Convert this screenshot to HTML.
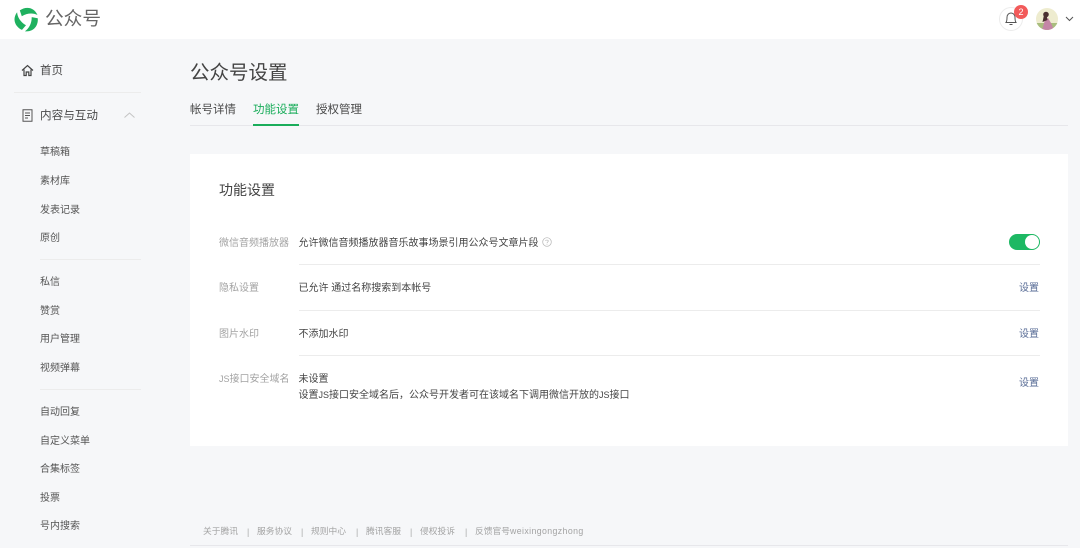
<!DOCTYPE html>
<html lang="zh"><head><meta charset="utf-8"><title>公众号设置</title>
<style>
*{margin:0;padding:0;box-sizing:border-box}
html,body{width:1080px;height:548px;overflow:hidden}
body{position:relative;background:#f6f7f9;font-family:"Liberation Sans","Noto Sans CJK SC",sans-serif;color:#353535}
#p{position:absolute;left:0;top:0;width:1080px;height:548px;filter:blur(.3px)}
.a{position:absolute;white-space:nowrap;line-height:1}
.s{position:absolute;left:40px;font-size:10px;line-height:1;color:#555;white-space:nowrap}
.l{position:absolute;left:219px;font-size:10px;line-height:1;color:#a3a3a3;white-space:nowrap}
.v{position:absolute;left:298.500px;font-size:10px;line-height:1;color:#444;white-space:nowrap}
.e{position:absolute;left:1019px;font-size:10px;line-height:1;color:#576b95;white-space:nowrap}
.h{position:absolute;height:1px;background:#ececec}
.f{position:absolute;top:527px;font-size:8.75px;line-height:1;color:#a3a3a3;white-space:nowrap}
.j{font-size:9px}
</style></head><body><div id="p">
<div class="a" style="left:0;top:0;width:1080px;height:39px;background:#fff"></div>
<svg class="a" style="left:14px;top:7px" width="25" height="25" viewBox="0 0 25 25"><defs><path id="b" d="M7.800 9.200 5.800 3.400C11.500-.8 20-.3 23.500 8 19.500 6 13.500 5.800 7.800 9.200Z" fill="#1fb15f"/></defs><use href="#b"/><use href="#b" transform="rotate(120 12.500 12.500)"/><use href="#b" transform="rotate(240 12.500 12.500)"/></svg>
<div class="a" style="left:45px;top:10px;font-size:18.700px;color:#666">公众号</div>
<div class="a" style="left:999px;top:7px;width:24px;height:24px;border:1px solid #ececec;border-radius:50%;background:#fff"></div>
<svg class="a" style="left:1004px;top:11px" width="14" height="15" viewBox="0 0 14 15"><path d="M2 11.500C3 10 3 8.500 3 6.500 3 3.500 5 2 7 2s4 1.500 4 4.500c0 2 0 3.500 1 5ZM5.500 13.500h3" fill="none" stroke="#555" stroke-width="1"/></svg>
<div class="a" style="left:1014px;top:5px;width:14px;height:14px;border-radius:50%;background:#f25a5a;color:#fff;font-size:9px;line-height:14px;text-align:center">2</div>
<svg class="a" style="left:1036px;top:8px" width="22" height="22" viewBox="0 0 22 22"><defs><clipPath id="c"><circle cx="11" cy="11" r="11"/></clipPath></defs><g clip-path="url(#c)"><rect width="22" height="22" fill="#eeeccf"/><rect y="15" width="22" height="7" fill="#a9bd7e"/><path d="M6 22l3-10 3-2 3 5 3 7Z" fill="#c486a6"/><circle cx="10" cy="6.500" r="2.800" fill="#4a3030"/><path d="M8 7l-1.500 7 5-2-1-5Z" fill="#4a3030"/></g></svg>
<svg class="a" style="left:1065px;top:16px" width="9" height="6" viewBox="0 0 9 6"><path d="M1 1l3.500 3.500L8 1" fill="none" stroke="#555" stroke-width="1"/></svg>

<svg class="a" style="left:21px;top:64px" width="13" height="13" viewBox="0 0 13 13"><path d="M1 6.500 6.500 1.500 12 6.500M3 5.500V11.500H5.200V8H7.800V11.500H10V5.500" fill="none" stroke="#444" stroke-width="1.200"/></svg>
<div class="a" style="left:40px;top:66px;font-size:11.500px;color:#4a4a4a">首页</div>
<div class="h" style="left:14px;top:92px;width:127px"></div>
<svg class="a" style="left:22px;top:109px" width="11" height="13" viewBox="0 0 11 13"><path d="M1 .7H10V12.300H1ZM3 4H8M3 6.500H8M3 9H6" fill="none" stroke="#555" stroke-width="1"/></svg>
<div class="a" style="left:40px;top:110px;font-size:11.600px;color:#4a4a4a">内容与互动</div>
<svg class="a" style="left:124px;top:112px" width="11" height="6" viewBox="0 0 11 6"><path d="M.5 5.500 5.500 1l5 4.500" fill="none" stroke="#c4c4c4" stroke-width="1"/></svg>

<div class="s" style="top:148px">草稿箱</div>
<div class="s" style="top:177px">素材库</div>
<div class="s" style="top:206px">发表记录</div>
<div class="s" style="top:234px">原创</div>
<div class="h" style="left:40px;top:259px;width:101px"></div>
<div class="s" style="top:278px">私信</div>
<div class="s" style="top:307px">赞赏</div>
<div class="s" style="top:335px">用户管理</div>
<div class="s" style="top:364px">视频弹幕</div>
<div class="h" style="left:40px;top:389px;width:101px"></div>
<div class="s" style="top:408px">自动回复</div>
<div class="s" style="top:437px">自定义菜单</div>
<div class="s" style="top:465px">合集标签</div>
<div class="s" style="top:494px">投票</div>
<div class="s" style="top:522px">号内搜索</div>

<div class="a" style="left:190px;top:64px;font-size:19.500px;color:#444">公众号设置</div>
<div class="a" style="left:190px;top:105px;font-size:11.500px;color:#4a4a4a">帐号详情</div>
<div class="a" style="left:253px;top:105px;font-size:11.500px;color:#1aad5b">功能设置</div>
<div class="a" style="left:316px;top:105px;font-size:11.500px;color:#4a4a4a">授权管理</div>
<div class="h" style="left:190px;top:125px;width:878px;background:#e7e7eb"></div>
<div class="a" style="left:253px;top:124px;width:46px;height:2px;background:#1aad5b"></div>

<div class="a" style="left:190px;top:154px;width:878px;height:292px;background:#fff"></div>
<div class="a" style="left:219px;top:183px;font-size:14px;color:#444">功能设置</div>

<div class="l" style="top:239px">微信音频播放器</div>
<div class="v" style="top:239px">允许微信音频播放器音乐故事场景引用公众号文章片段</div>
<svg class="a" style="left:542px;top:237px" width="10" height="10" viewBox="0 0 10 10"><circle cx="5" cy="5" r="4.300" fill="none" stroke="#b5b5b5" stroke-width=".7"/><path d="M3.500 3.800C3.700 2.800 6.300 2.800 6.300 4 6.300 5 5 5 5 6.200M5 7v.6" fill="none" stroke="#b5b5b5" stroke-width=".7"/></svg>
<div class="a" style="left:1009px;top:234px;width:31px;height:16px;border-radius:8px;background:#1db863"></div>
<div class="a" style="left:1025px;top:235px;width:14px;height:14px;border-radius:50%;background:#fff"></div>
<div class="h" style="left:299px;top:264px;width:741px"></div>

<div class="l" style="top:284px">隐私设置</div>
<div class="v" style="top:284px">已允许 通过名称搜索到本帐号</div>
<div class="e" style="top:284px">设置</div>
<div class="h" style="left:299px;top:310px;width:741px"></div>

<div class="l" style="top:330px">图片水印</div>
<div class="v" style="top:330px">不添加水印</div>
<div class="e" style="top:330px">设置</div>
<div class="h" style="left:299px;top:355px;width:741px"></div>

<div class="l" style="top:375px"><span class="j">JS</span>接口安全域名</div>
<div class="v" style="top:375px">未设置</div>
<div class="v" style="top:391px">设置<span class="j">JS</span>接口安全域名后，公众号开发者可在该域名下调用微信开放的<span class="j">JS</span>接口</div>
<div class="e" style="top:379px">设置</div>

<div class="f" style="left:203px">关于腾讯</div>
<div class="f" style="left:247px;top:528px;color:#aaa">|</div>
<div class="f" style="left:257px">服务协议</div>
<div class="f" style="left:301px;top:528px;color:#aaa">|</div>
<div class="f" style="left:311px">规则中心</div>
<div class="f" style="left:356px;top:528px;color:#aaa">|</div>
<div class="f" style="left:366px">腾讯客服</div>
<div class="f" style="left:410px;top:528px;color:#aaa">|</div>
<div class="f" style="left:420px">侵权投诉</div>
<div class="f" style="left:465px;top:528px;color:#aaa">|</div>
<div class="f" style="left:475px">反馈官号<span style="letter-spacing:.4px">weixingongzhong</span></div>
<div class="h" style="left:190px;top:545px;width:878px;background:#e7e7eb"></div>
</div></body></html>
